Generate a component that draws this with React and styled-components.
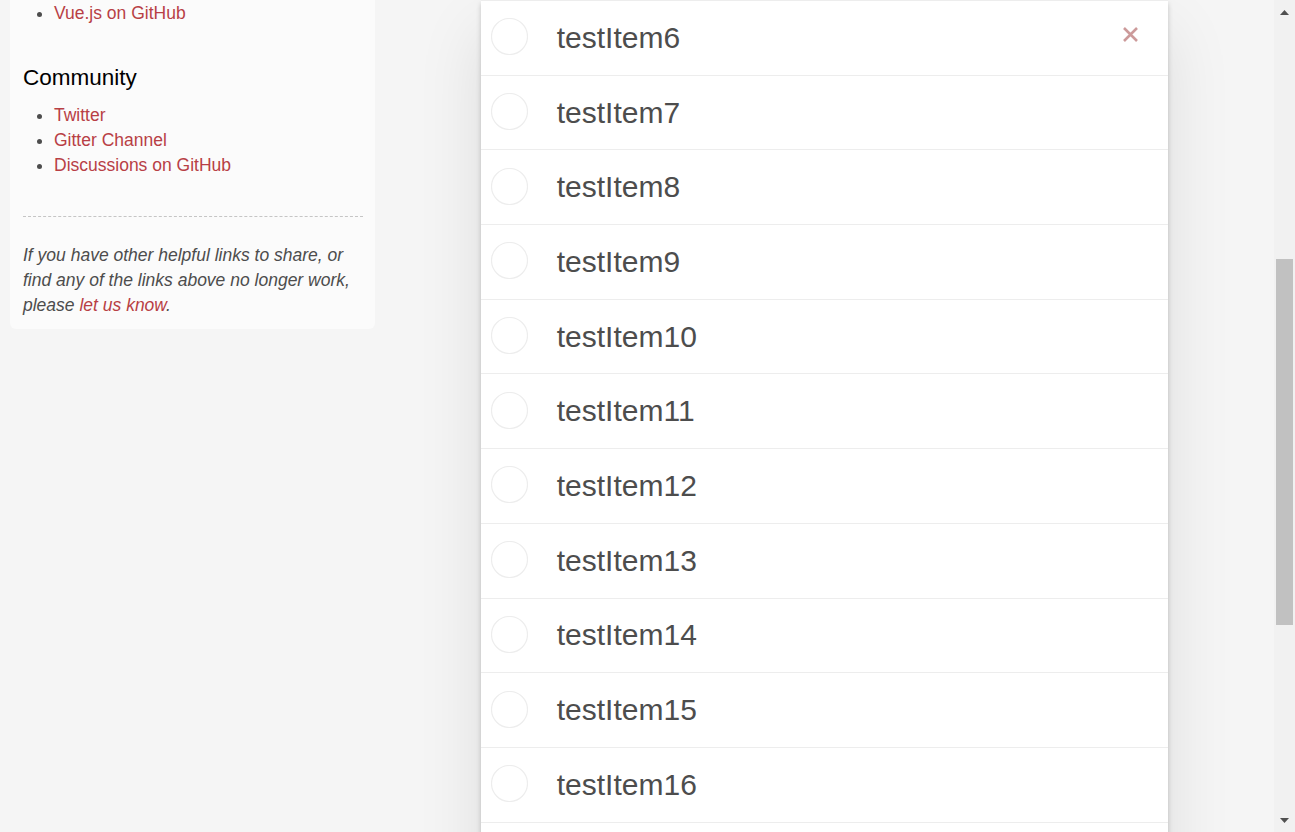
import React from "react";
import styled, { createGlobalStyle } from "styled-components";

const GlobalStyle = createGlobalStyle`
  html, body {
    margin: 0;
    padding: 0;
    height: 100%;
    overflow: hidden;
  }
  body {
    background: #f5f5f5;
    font-family: "Liberation Sans", Arial, sans-serif;
    color: #4d4d4d;
  }
`;

const Page = styled.div`
  display: flex;
  height: 832px;
  overflow: hidden;
`;

const Main = styled.div`
  flex: 1;
  display: flex;
  min-width: 0;
`;

const SideColumn = styled.aside`
  width: 375px;
  flex-shrink: 0;
  display: flex;
  align-items: flex-start;
`;

const Learn = styled.div`
  margin-left: 10px;
  width: 365px;
  box-sizing: border-box;
  padding: 1px 12px 11px 13px;
  background: #fbfbfb;
  border-radius: 0 0 6px 6px;
  font-size: 17.5px;
  line-height: 25px;
`;

const LinkList = styled.ul`
  margin: 0;
  padding-left: 31px;
  list-style: disc;
  color: #4d4d4d;
`;

const Link = styled.a`
  color: #b83f45;
  text-decoration: none;
`;

const Heading = styled.h3`
  margin: 40px 0 12px;
  font-size: 22.5px;
  line-height: 24.75px;
  font-weight: 400;
  color: #000;
`;

const Divider = styled.hr`
  margin: 38px 0 26px;
  border: 0;
  border-top: 1px dashed #c5c5c5;
  height: 0;
`;

const Note = styled.p`
  margin: 0;
  font-style: italic;
  color: #4d4d4d;
`;

const Content = styled.section`
  flex: 1;
  display: flex;
  justify-content: center;
  align-items: flex-start;
`;

const TodoApp = styled.div`
  width: 687.5px;
  background: #fff;
  box-shadow: 0 2.5px 5px 0 rgba(0, 0, 0, 0.2), 0 31px 62px 0 rgba(0, 0, 0, 0.1);
`;

const TodoList = styled.ul`
  margin: 0;
  padding: 0;
  list-style: none;
  border-top: 1px solid #ededed;
`;

const TodoRow = styled.li`
  height: 74.7px;
  box-sizing: border-box;
  border-bottom: 1px solid #ededed;
  display: flex;
  align-items: center;
  font-size: 30px;
  line-height: 36px;
`;

const Toggle = styled.span`
  width: 37px;
  height: 37px;
  margin: 0 0 2px 10px;
  flex-shrink: 0;
  display: flex;
`;

const Label = styled.label`
  margin-left: 29px;
  color: #4d4d4d;
`;

const Destroy = styled.button`
  margin: 0 30px 6px auto;
  width: 15px;
  height: 15px;
  padding: 0;
  border: 0;
  background: none;
  display: flex;
  visibility: ${(p) => (p.$shown ? "visible" : "hidden")};
`;

const ScrollBar = styled.div`
  width: 21px;
  flex-shrink: 0;
  background: #f1f1f1;
  display: flex;
  flex-direction: column;
`;

const ArrowButton = styled.div`
  height: 21px;
  display: flex;
  align-items: center;
  justify-content: center;
`;

const Track = styled.div`
  flex: 1;
  display: flex;
  justify-content: center;
`;

const Thumb = styled.div`
  margin-top: 238px;
  width: 17px;
  height: 366px;
  background: #c1c1c1;
`;

const Circle = () => (
  <svg width="37" height="37" viewBox="0 0 37 37">
    <circle cx="18.5" cy="18.5" r="18" fill="none" stroke="#ededed" strokeWidth="1.2" />
  </svg>
);

const Cross = () => (
  <svg width="15" height="15" viewBox="0 0 15 15">
    <path d="M1 1L14 14M14 1L1 14" stroke="#cc9a9a" strokeWidth="2.6" strokeLinecap="butt" />
  </svg>
);

const Arrow = ({ down }) => (
  <svg width="9" height="5" viewBox="0 0 9 5" style={{ marginTop: down ? -2 : 3 }}>
    <path d={down ? "M0 0H9L4.5 5Z" : "M0 5H9L4.5 0Z"} fill="#505050" />
  </svg>
);

const items = Array.from({ length: 12 }, (_, i) => `testItem${i + 6}`);

const App = () => {
  return (
    <Page>
      <GlobalStyle />
      <Main>
        <SideColumn>
          <Learn>
            <LinkList>
              <li>
                <Link href="#">Vue.js on GitHub</Link>
              </li>
            </LinkList>
            <Heading>Community</Heading>
            <LinkList>
              <li>
                <Link href="#">Twitter</Link>
              </li>
              <li>
                <Link href="#">Gitter Channel</Link>
              </li>
              <li>
                <Link href="#">Discussions on GitHub</Link>
              </li>
            </LinkList>
            <Divider />
            <Note>
              If you have other helpful links to share, or find any of the links above no longer
              work, please <Link href="#">let us know</Link>.
            </Note>
          </Learn>
        </SideColumn>
        <Content>
          <TodoApp>
            <TodoList>
              {items.map((name, i) => (
                <TodoRow key={name}>
                  <Toggle>
                    <Circle />
                  </Toggle>
                  <Label>{name}</Label>
                  <Destroy $shown={i === 0}>
                    <Cross />
                  </Destroy>
                </TodoRow>
              ))}
            </TodoList>
          </TodoApp>
        </Content>
      </Main>
      <ScrollBar>
        <ArrowButton>
          <Arrow />
        </ArrowButton>
        <Track>
          <Thumb />
        </Track>
        <ArrowButton>
          <Arrow down />
        </ArrowButton>
      </ScrollBar>
    </Page>
  );
};

export default App;
